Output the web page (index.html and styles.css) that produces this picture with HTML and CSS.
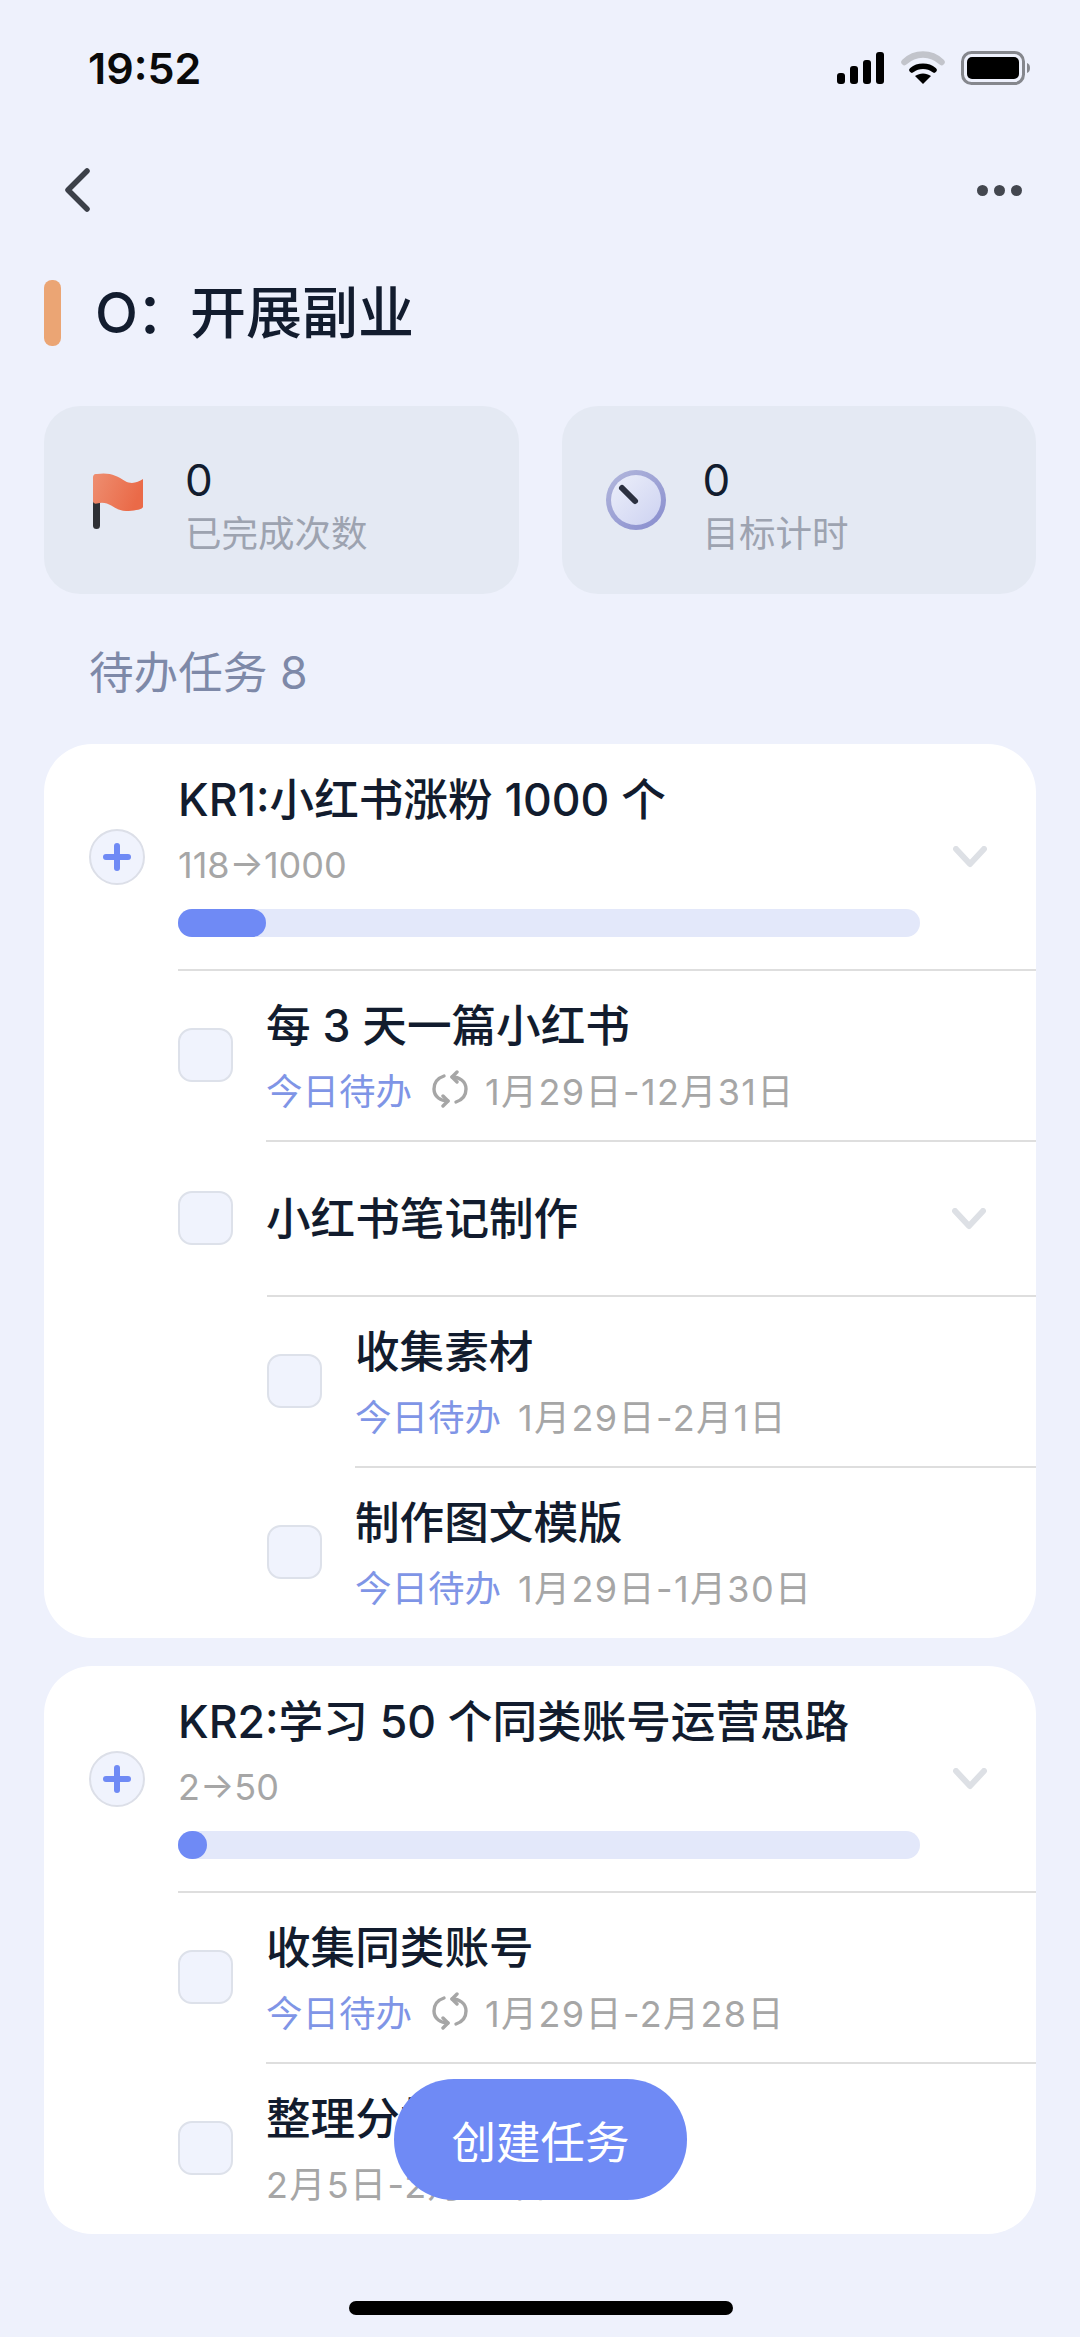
FILE: index.html
```html
<!DOCTYPE html>
<html lang="zh-CN">
<head>
<meta charset="utf-8">
<title>O：开展副业</title>
<link rel="stylesheet" href="styles.css">
</head>
<body>
<div class="app">
  <svg width="0" height="0" class="defs">
    <defs>
      <symbol id="chev" viewBox="0 0 34 22"><path d="M3 3 L17 18 L31 3" fill="none" stroke="#dde0e5" stroke-width="6" stroke-linecap="round" stroke-linejoin="round"/></symbol>
      <symbol id="repeat" viewBox="0 0 38 38"><g fill="none" stroke="#a6a6a6" stroke-width="3.4" stroke-linecap="round" stroke-linejoin="round"><path d="M21 7 C28 7 35 11 35 19 C35 26 31 30 25 32"/><path d="M26 2 L21 7 L26 12"/><path d="M17 31 C10 31 3 27 3 19 C3 12 7 8 13 6"/><path d="M12 26 L17 31 L12 36"/></g></symbol>
    </defs>
  </svg>

  <header class="status">
    <span class="time">19:52</span>
    <div class="status-icons">
      <svg class="signal" width="48" height="32" viewBox="0 0 48 32"><g fill="#000"><rect x="0" y="21" width="8" height="11" rx="3"/><rect x="13" y="14" width="8" height="18" rx="3"/><rect x="26" y="8" width="8" height="24" rx="3"/><rect x="39" y="0" width="8" height="32" rx="3"/></g></svg>
      <svg class="wifi" width="44" height="34" viewBox="0 0 44 34"><path d="M3.500 11 C14 1 30 1 40.500 11" fill="none" stroke="#c2c4cb" stroke-width="6.500" stroke-linecap="round"/><path d="M11 19 C17 14 27 14 33 19" fill="none" stroke="#000" stroke-width="5.500" stroke-linecap="round"/><path d="M22 33 L14 25 C19 21.500 25 21.500 30 25 Z" fill="#000"/></svg>
      <svg class="battery" width="70" height="34" viewBox="0 0 70 34"><rect x="1.500" y="1.500" width="61" height="31" rx="9" fill="none" stroke="#85878d" stroke-width="3"/><rect x="6" y="6" width="52" height="22" rx="5" fill="#000"/><path d="M66 12 C70 13 70 21 66 22 Z" fill="#85878d"/></svg>
    </div>
  </header>

  <nav class="nav">
    <svg width="26" height="44" viewBox="0 0 26 44"><path d="M23 3 L4 22 L23 41" fill="none" stroke="#3c4049" stroke-width="5.500" stroke-linecap="round" stroke-linejoin="round"/></svg>
    <div class="dots"><i></i><i></i><i></i></div>
  </nav>

  <div class="title-row">
    <span class="title-mark"></span>
    <h1 class="title"><span class="title-prefix">O：</span>开展副业</h1>
  </div>

  <section class="stats">
    <div class="stat">
      <svg class="stat-icon" width="60" height="60" viewBox="0 0 60 60">
        <defs><linearGradient id="flag" x1="0" y1="0" x2="1" y2="0.300"><stop offset="0" stop-color="#ee8e70"/><stop offset="1" stop-color="#ea6a48"/></linearGradient></defs>
        <rect x="5" y="30" width="7" height="29" rx="3.500" fill="#2e3035"/>
        <path d="M9 4 C5 4 5 6 5 9 L5 31 C5 33 7 34 9 33.500 C22 30 26 41 38 41 C47 41 55 39 55 37 L55 9 C50 12 44 15 37 11 C29 6 22 2 9 4 Z" fill="url(#flag)"/>
      </svg>
      <div class="stat-text"><span class="stat-num">0</span><span class="stat-label">已完成次数</span></div>
    </div>
    <div class="stat">
      <svg class="stat-icon" width="60" height="60" viewBox="0 0 60 60">
        <defs><linearGradient id="dial" x1="0" y1="0" x2="1" y2="1"><stop offset="0" stop-color="#eceffa"/><stop offset="1" stop-color="#cdd2f1"/></linearGradient><linearGradient id="ring" x1="0" y1="0" x2="0.800" y2="1"><stop offset="0" stop-color="#b3b8dc"/><stop offset="1" stop-color="#8b90cf"/></linearGradient></defs>
        <circle cx="30" cy="30" r="30" fill="url(#ring)"/>
        <circle cx="30" cy="30" r="25" fill="url(#dial)"/>
        <path d="M16 18 L29 31" stroke="#2b3040" stroke-width="6" stroke-linecap="round"/>
      </svg>
      <div class="stat-text"><span class="stat-num">0</span><span class="stat-label">目标计时</span></div>
    </div>
  </section>

  <div class="section-label">待办任务 8</div>

  <section class="card">
    <div class="kr">
      <span class="plus"></span>
      <div class="kr-body">
        <div class="kr-text">
          <div class="name">KR1:小红书涨粉 1000 个</div>
          <div class="meta kr-meta">118→1000</div>
          <div class="track"><div class="fill" style="width:88px"></div></div>
        </div>
        <svg class="chev" width="34" height="22"><use href="#chev"/></svg>
      </div>
    </div>
    <div class="task">
      <span class="check"></span>
      <div class="task-body first">
        <div class="name">每 3 天一篇小红书</div>
        <div class="meta"><span class="today">今日待办</span><svg class="repeat" width="38" height="38"><use href="#repeat"/></svg><span class="range">1月29日-12月31日</span></div>
      </div>
    </div>
    <div class="task">
      <span class="check"></span>
      <div class="task-body group">
        <div class="name">小红书笔记制作</div>
        <svg class="chev" width="34" height="22"><use href="#chev"/></svg>
      </div>
    </div>
    <div class="task sub">
      <span class="check"></span>
      <div class="task-body first">
        <div class="name">收集素材</div>
        <div class="meta"><span class="today">今日待办</span><span class="range date">1月29日-2月1日</span></div>
      </div>
    </div>
    <div class="task sub">
      <span class="check"></span>
      <div class="task-body">
        <div class="name">制作图文模版</div>
        <div class="meta"><span class="today">今日待办</span><span class="range date">1月29日-1月30日</span></div>
      </div>
    </div>
  </section>

  <section class="card">
    <div class="kr">
      <span class="plus"></span>
      <div class="kr-body">
        <div class="kr-text">
          <div class="name">KR2:学习 50 个同类账号运营思路</div>
          <div class="meta kr-meta">2→50</div>
          <div class="track"><div class="fill" style="width:29px"></div></div>
        </div>
        <svg class="chev" width="34" height="22"><use href="#chev"/></svg>
      </div>
    </div>
    <div class="task">
      <span class="check"></span>
      <div class="task-body first">
        <div class="name">收集同类账号</div>
        <div class="meta"><span class="today">今日待办</span><svg class="repeat" width="38" height="38"><use href="#repeat"/></svg><span class="range">1月29日-2月28日</span></div>
      </div>
    </div>
    <div class="task">
      <span class="check"></span>
      <div class="task-body">
        <div class="name">整理分析</div>
        <div class="meta"><span class="range">2月5日-2月28日</span></div>
      </div>
    </div>
  </section>

  <button class="fab">创建任务</button>
  <div class="home-bar"></div>
</div>
</body>
</html>
```
FILE: styles.css
```css
* { box-sizing: border-box; }
html, body { margin: 0; padding: 0; }
body { background: #eef1fc; font-family: "Inter", "Noto Sans CJK SC", sans-serif; color: #121c2e; }
.defs { position: absolute; }
.app { position: relative; width: 1080px; height: 2337px; overflow: hidden; background: #eef1fc; }

.status { height: 136px; display: flex; align-items: center; justify-content: space-between; padding: 0 49px 0 88px; }
.time { font-size: 43px; font-weight: 600; color: #0a0a0a; letter-spacing: 0; }
.status-icons { display: flex; align-items: center; gap: 16px; }

.nav { height: 108px; display: flex; align-items: center; justify-content: space-between; padding: 0 58px 0 64px; }
.dots { display: flex; gap: 6px; }
.dots i { width: 11px; height: 11px; border-radius: 50%; background: #43474f; }

.title-row { height: 138px; display: flex; align-items: center; padding-left: 44px; }
.title-mark { width: 17px; height: 66px; border-radius: 8px; background: #eba574; }
.title { margin: 0 0 0 34px; font-size: 56px; font-weight: 500; line-height: 66px; color: #121c2e; }
.title-prefix { letter-spacing: -2px; }

.stats { margin-top: 24px; padding: 0 44px; display: flex; gap: 43px; }
.stat { flex: 1; height: 188px; border-radius: 36px; background: #e4e9f3; display: flex; align-items: center; gap: 37px; padding: 0 44px; }
.stat-icon { flex: none; }
.stat-text { display: flex; flex-direction: column; padding-top: 14px; }
.stat-num { font-size: 44px; line-height: 48px; color: #121c2e; }
.stat-label { margin-top: 6px; font-size: 36.500px; line-height: 48px; color: #9da3b0; }

.section-label { height: 150px; padding: 56px 0 0 89px; font-size: 44.600px; line-height: 46px; color: #7e89a8; }

.card { margin: 0 44px 28px; border-radius: 48px; background: #fff; overflow: hidden; }

.kr { display: flex; align-items: center; padding-left: 45px; height: 225px; }
.plus { position: relative; flex: none; width: 56px; height: 56px; margin-right: 33px; border-radius: 50%; background: #f0f3fd; border: 2px solid #dcdfe8; }
.plus::before, .plus::after { content: ""; position: absolute; left: 50%; top: 50%; background: #6f8af5; border-radius: 3px; }
.plus::before { width: 28px; height: 6px; margin: -3px 0 0 -14px; }
.plus::after { width: 6px; height: 28px; margin: -14px 0 0 -3px; }
.kr-body { flex: 1; height: 100%; display: flex; align-items: center; }
.kr-text { width: 742px; align-self: flex-start; padding-top: 27px; }
.chev { flex: none; margin-left: 33px; }
.name { font-size: 44.600px; line-height: 58px; font-weight: 500; color: #121c2e; white-space: nowrap; }
.meta { display: flex; align-items: center; height: 48px; font-size: 36.500px; color: #a6a6a6; white-space: nowrap; }
.kr-meta { margin-top: 12px; font-size: 36px; }
.track { margin-top: 20px; height: 28px; border-radius: 14px; background: #e3e8fa; }
.fill { height: 100%; border-radius: 14px; background: #6f8af5; }

.task { display: flex; align-items: center; margin-left: 134px; }
.task.sub { margin-left: 223px; }
.check { flex: none; width: 55px; height: 54px; margin-right: 33px; border-radius: 14px; background: #f0f3fd; border: 2px solid #dde1ea; }
.task-body { flex: 1; height: 172px; padding-top: 26px; border-top: 2px solid #dedede; }
.task-body.first { border-top: 0; height: 171px; box-shadow: inset 0 2px 0 #dedede; margin-left: -88px; padding-left: 88px; padding-top: 28px; }
.task-body.group { height: 155px; padding-top: 0; display: flex; align-items: center; justify-content: space-between; }
.task-body.group .chev { margin: 0 50px 0 0; }
.task-body .meta { margin-top: 10px; }
.today { color: #7f95e6; }
.range { font-size: 36px; letter-spacing: 1.400px; }
.repeat { margin: 0 16px 0 19px; }
.date { margin-left: 17px; }

.fab { position: absolute; left: 394px; top: 2079px; width: 293px; height: 121px; border: 0; border-radius: 60px; background: #6f8af5; color: #fff; font-family: "Noto Sans CJK SC", sans-serif; font-size: 44.500px; }
.home-bar { position: absolute; left: 349px; top: 2301px; width: 384px; height: 14px; border-radius: 7px; background: #000; }
```
